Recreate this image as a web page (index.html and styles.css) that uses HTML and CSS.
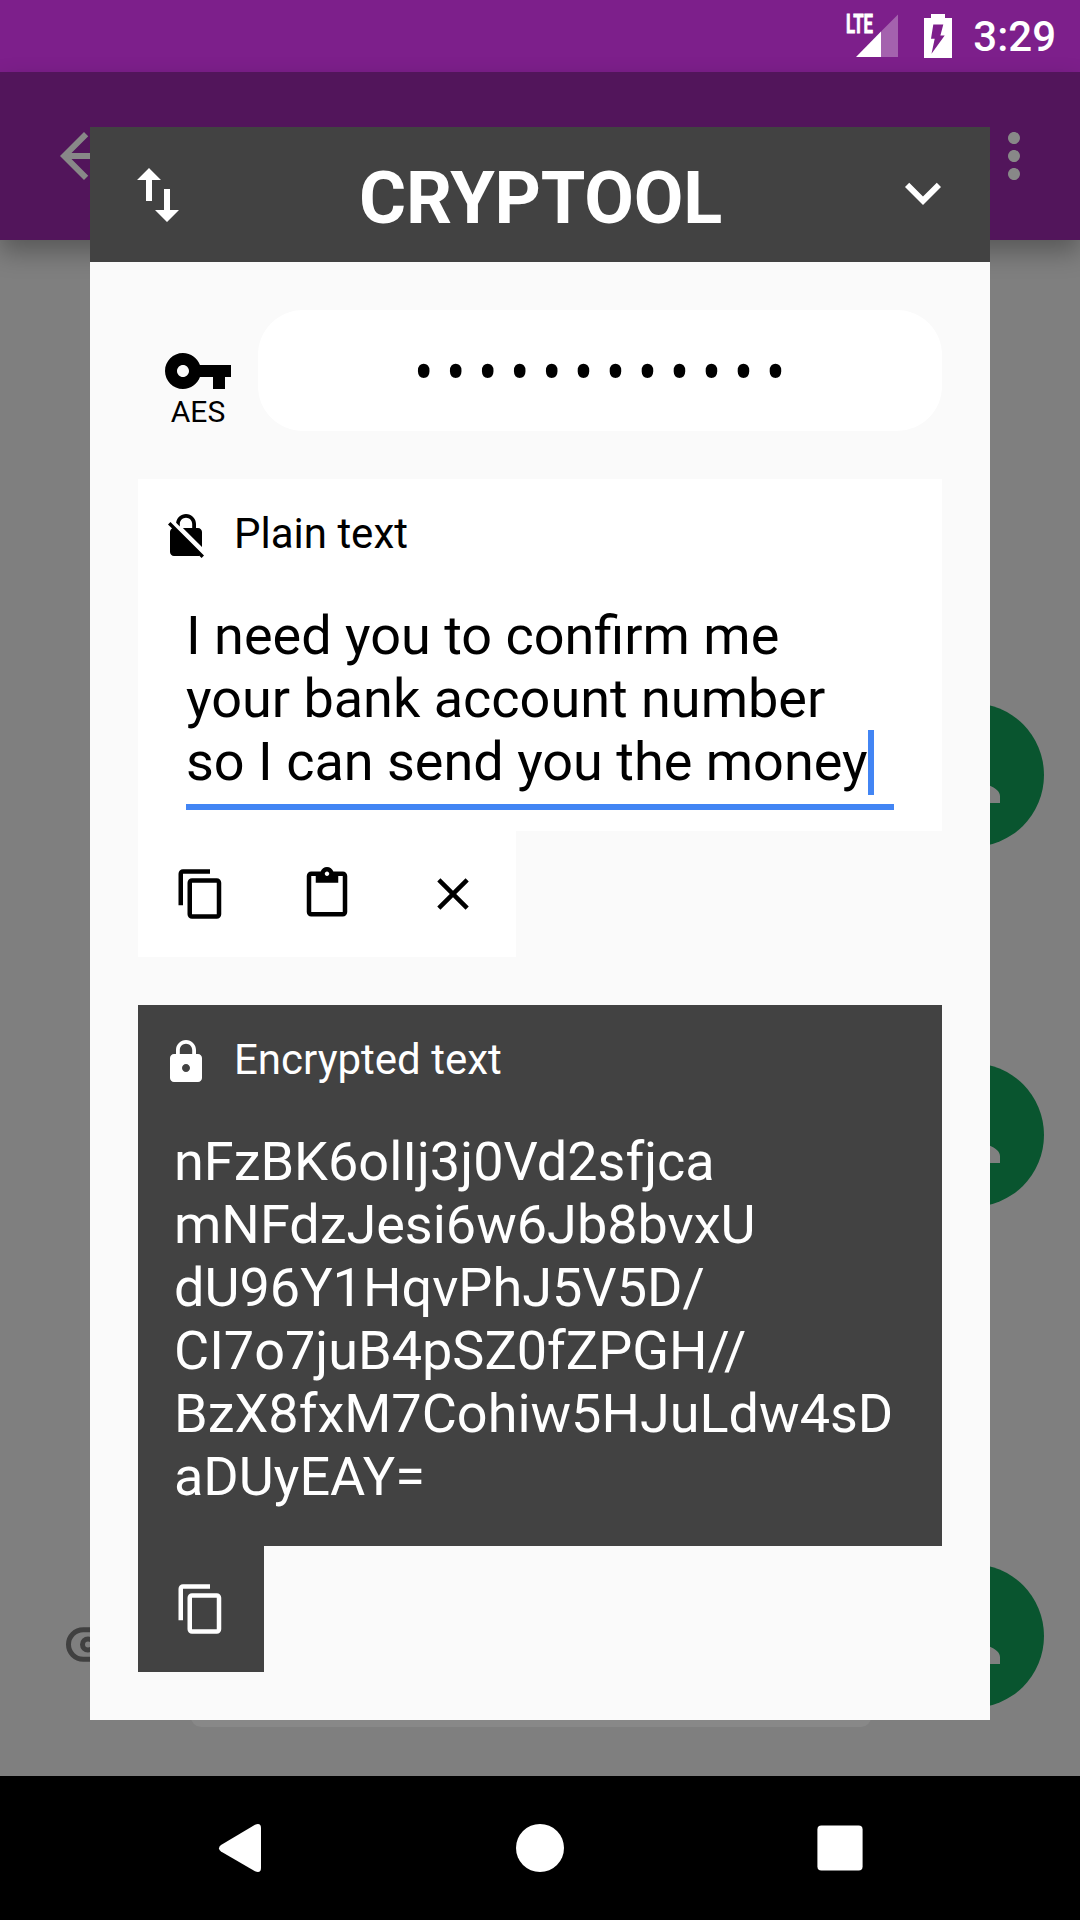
FILE: index.html
```html
<!DOCTYPE html>
<html lang="en">
<head>
<meta charset="utf-8">
<title>Cryptool</title>
<link rel="stylesheet" href="styles.css">
</head>
<body>
<svg class="defs" width="0" height="0" aria-hidden="true">
  <symbol id="copy" viewBox="0 0 24 24"><path d="M16 1H4c-1.1 0-2 .9-2 2v14h2V3h12V1zm3 4H8c-1.1 0-2 .9-2 2v14c0 1.1.9 2 2 2h11c1.1 0 2-.9 2-2V7c0-1.1-.9-2-2-2zm0 16H8V7h11v14z"/></symbol>
  <symbol id="person" viewBox="0 0 24 24"><path d="M12 12c2.21 0 4-1.79 4-4s-1.79-4-4-4-4 1.79-4 4 1.79 4 4 4zm0 2c-2.67 0-8 1.34-8 4v2h16v-2c0-2.66-5.33-4-8-4z"/></symbol>
</svg>
<div class="screen">
  <header class="status-bar">
    <svg class="signal" width="56" height="48" viewBox="0 0 56 48">
      <text x="2" y="23" textLength="27" lengthAdjust="spacingAndGlyphs">LTE</text>
      <path class="faint" d="M37 21.500L54 4.500V47H37z"/>
      <path d="M12 47L37 21.500V47z"/>
    </svg>
    <svg class="battery" width="28" height="44" viewBox="0 0 28 44">
      <path fill-rule="evenodd" d="M7 0h14v4h7v40H0V4h7zM9.300 10.500L7 24.700h3.700L7.500 39.700L20.700 21.400h-4.300L19.300 10.500z"/>
    </svg>
    <span class="clock">3:29</span>
  </header>

  <div class="app-bar">
    <svg width="72" height="72" viewBox="0 0 24 24"><path d="M20 11H7.830l5.590-5.590L12 4l-8 8 8 8 1.410-1.410L7.830 13H20v-2z"/></svg>
    <svg width="72" height="72" viewBox="0 0 24 24"><path d="M12 8c1.100 0 2-.9 2-2s-.9-2-2-2-2 .9-2 2 .9 2 2 2zm0 2c-1.100 0-2 .9-2 2s.9 2 2 2 2-.9 2-2-.9-2-2-2zm0 6c-1.100 0-2 .9-2 2s.9 2 2 2 2-.9 2-2-.9-2-2-2z"/></svg>
  </div>

  <main class="chat">
    <div class="message"><div class="avatar"><svg width="84" height="84"><use href="#person"/></svg></div></div>
    <div class="message second"><div class="avatar"><svg width="84" height="84"><use href="#person"/></svg></div></div>
    <div class="message third">
      <svg class="reveal" width="60" height="36" viewBox="0 0 60 36"><rect x="2.500" y="2.800" width="55" height="29.500" rx="14.700"/><circle cx="22" cy="17.500" r="5.500"/></svg>
      <div class="avatar"><svg width="84" height="84"><use href="#person"/></svg></div>
    </div>
    <div class="compose"></div>
  </main>

  <nav class="nav-bar">
    <svg width="48" height="48" viewBox="0 0 48 48"><path d="M5 21Q1 24 5 27.500L39 47.300Q45 49.500 45 44V4Q45-1.500 39 .7z"/></svg>
    <svg width="48" height="48" viewBox="0 0 48 48"><circle cx="24" cy="24" r="24"/></svg>
    <svg width="48" height="48" viewBox="0 0 48 48"><rect x="1.400" y="1.400" width="45.200" height="45.200" rx="4"/></svg>
  </nav>

  <section class="dialog">
    <div class="title-bar">
      <svg width="72" height="72" viewBox="0 0 24 24"><path d="M9 3L5 6.990h3V14h2V6.990h3L9 3zm7 14.010V10h-2v7.010h-3L15 21l4-3.990h-3z"/></svg>
      <h1>CRYPTOOL</h1>
      <svg class="chevron" width="72" height="72" viewBox="0 0 24 24"><path d="M16.590 8.590L12 13.170 7.410 8.590 6 10l6 6 6-6z"/></svg>
    </div>
    <div class="content">
      <div class="key-row">
        <div class="key">
          <svg width="72" height="72" viewBox="0 0 24 24"><path d="M12.650 10C11.830 7.670 9.610 6 7 6c-3.310 0-6 2.690-6 6s2.690 6 6 6c2.610 0 4.830-1.670 5.650-4H17v4h4v-4h2v-4H12.650zM7 14c-1.100 0-2-.9-2-2s.9-2 2-2 2 .9 2 2-.9 2-2 2z"/></svg>
          <span>AES</span>
        </div>
        <div class="password"><span>••••••••••••</span></div>
      </div>

      <div class="block light">
        <div class="card">
          <div class="label">
            <svg width="48" height="48" viewBox="0 0 24 24"><path d="M21 21.780L4.220 5 3 6.220l2.040 2.040C4.420 8.600 4 9.250 4 10v10c0 1.100.9 2 2 2h12c.23 0 .45-.05.66-.12L19.780 23 21 21.780zM8.900 6c0-1.710 1.390-3.100 3.100-3.100s3.100 1.390 3.100 3.100v2h-4.660L20 17.560V10c0-1.100-.9-2-2-2h-1V6c0-2.760-2.240-5-5-5-2.560 0-4.640 1.930-4.940 4.400L8.900 7.240V6z"/></svg>
            <span>Plain text</span>
          </div>
          <div class="editor">I need you to confirm me<br>your bank account number<br>so I can send you the money<i class="caret"></i></div>
        </div>
        <div class="actions">
          <svg width="54" height="54"><use href="#copy"/></svg>
          <svg width="54" height="54" viewBox="0 0 24 24"><path d="M19 2h-4.180C14.400.84 13.300 0 12 0c-1.300 0-2.400.84-2.820 2H5c-1.100 0-2 .9-2 2v16c0 1.100.9 2 2 2h14c1.100 0 2-.9 2-2V4c0-1.100-.9-2-2-2zm-7 0c.55 0 1 .45 1 1s-.45 1-1 1-1-.45-1-1 .45-1 1-1zm7 18H5V4h2v3h10V4h2v16z"/></svg>
          <svg width="54" height="54" viewBox="0 0 24 24"><path d="M19 6.410L17.590 5 12 10.590 6.410 5 5 6.410 10.590 12 5 17.590 6.410 19 12 13.410 17.590 19 19 17.590 13.410 12z"/></svg>
        </div>
      </div>

      <div class="block dark">
        <div class="card">
          <div class="label">
            <svg width="48" height="48" viewBox="0 0 24 24"><path d="M18 8h-1V6c0-2.760-2.240-5-5-5S7 3.240 7 6v2H6c-1.100 0-2 .9-2 2v10c0 1.100.9 2 2 2h12c1.100 0 2-.9 2-2V10c0-1.100-.9-2-2-2zm-6 9c-1.100 0-2-.9-2-2s.9-2 2-2 2 .9 2 2-.9 2-2 2zm3.100-9H8.900V6c0-1.710 1.390-3.100 3.100-3.100 1.710 0 3.100 1.390 3.100 3.100v2z"/></svg>
            <span>Encrypted text</span>
          </div>
          <div class="cipher">nFzBK6olIj3j0Vd2sfjca<br>mNFdzJesi6w6Jb8bvxU<br>dU96Y1HqvPhJ5V5D/<br>CI7o7juB4pSZ0fZPGH//<br>BzX8fxM7Cohiw5HJuLdw4sD<br>aDUyEAY=</div>
        </div>
        <div class="actions">
          <svg width="54" height="54"><use href="#copy"/></svg>
        </div>
      </div>
    </div>
  </section>
</div>
</body>
</html>
```
FILE: styles.css
```css
* { box-sizing: border-box; }
body { margin: 0; font-family: Roboto, sans-serif; }
svg { display: block; flex: none; fill: currentColor; }
.defs { position: absolute; }

.screen {
  position: relative;
  display: flex;
  flex-direction: column;
  width: 1080px;
  height: 1920px;
  overflow: hidden;
  background: #7f7f7f;
}

.status-bar {
  display: flex;
  align-items: flex-start;
  height: 72px;
  padding: 10px 24px 0 0;
  justify-content: flex-end;
  background: #7d1f8b;
  color: #fff;
}
.signal text { font-size: 26px; font-weight: 700; stroke: currentColor; stroke-width: .8; }
.signal .faint { opacity: .3; }
.battery { margin: 4px 0 0 24px; }
.clock { margin-left: 21px; font-size: 42px; font-weight: 500; line-height: 54px; }

.app-bar {
  display: flex;
  justify-content: space-between;
  height: 168px;
  padding: 48px 30px 0 48px;
  background: #52155b;
  color: #888;
  box-shadow: 0 12px 24px rgba(0, 0, 0, .3);
}

.chat {
  display: flex;
  flex-direction: column;
  height: 1536px;
  padding: 463px 36px 0 66px;
}
.message { display: flex; justify-content: flex-end; flex: none; }
.second { margin-top: 216px; }
.third { margin-top: 357px; align-items: center; justify-content: space-between; }
.avatar {
  display: flex;
  align-items: center;
  justify-content: center;
  width: 144px;
  height: 144px;
  border-radius: 50%;
  background: #09552f;
  color: #808080;
}
.reveal { margin-top: 18px; fill: none; stroke: #404040; stroke-width: 5; }
.compose {
  flex: none;
  width: 680px;
  height: 60px;
  margin: -41px 0 0 125px;
  border-radius: 10px;
  background: #888;
}

.nav-bar {
  display: flex;
  align-items: center;
  justify-content: center;
  gap: 252px;
  height: 144px;
  background: #000;
  color: #fff;
}

.dialog {
  position: absolute;
  left: 90px;
  top: 127px;
  width: 900px;
  height: 1593px;
  background: #fafafa;
}
.title-bar {
  display: flex;
  align-items: center;
  justify-content: space-between;
  height: 135px;
  padding: 0 31px 0 32px;
  background: #424242;
  color: #fff;
}
.title-bar h1 {
  margin: 8px 0 0;
  font-size: 72px;
  font-weight: 700;
  line-height: 84px;
  letter-spacing: -.2px;
}
.chevron { margin-bottom: 4px; }

.content { display: flex; flex-direction: column; gap: 48px; padding: 48px; }
.key-row { display: flex; height: 121px; }
.key {
  display: flex;
  flex-direction: column;
  align-items: center;
  width: 120px;
  padding-top: 25px;
  font-size: 30px;
  line-height: 35px;
}
.key span { margin-top: -13px; }
.password {
  flex: 1;
  padding-left: 156px;
  border-radius: 45px;
  background: #fff;
  font-size: 58px;
  line-height: 121px;
  letter-spacing: 12.4px;
  white-space: nowrap;
}
.password span { display: inline-block; transform: translateY(3px) scaleY(1.15); }

.light { --surface: #fff; color: #000; }
.dark { --surface: #424242; color: #fff; }
.card { background: var(--surface); }
.light .card { height: 352px; }
.dark .card { height: 541px; }
.label {
  display: flex;
  gap: 24px;
  height: 111px;
  padding: 33px 24px 0;
  font-size: 42px;
  line-height: 43px;
}
.editor {
  height: 220px;
  margin: 0 48px;
  padding-top: 14px;
  border-bottom: 6px solid #4285f4;
  font-size: 54px;
  line-height: 63px;
  white-space: nowrap;
}
.caret {
  display: inline-block;
  width: 6px;
  height: 65px;
  margin-bottom: -2px;
  vertical-align: bottom;
  background: #4285f4;
}
.cipher { padding: 14px 36px; font-size: 54px; line-height: 63px; white-space: nowrap; }
.actions {
  display: flex;
  gap: 72px;
  width: max-content;
  height: 126px;
  padding: 36px;
  background: var(--surface);
}
```
